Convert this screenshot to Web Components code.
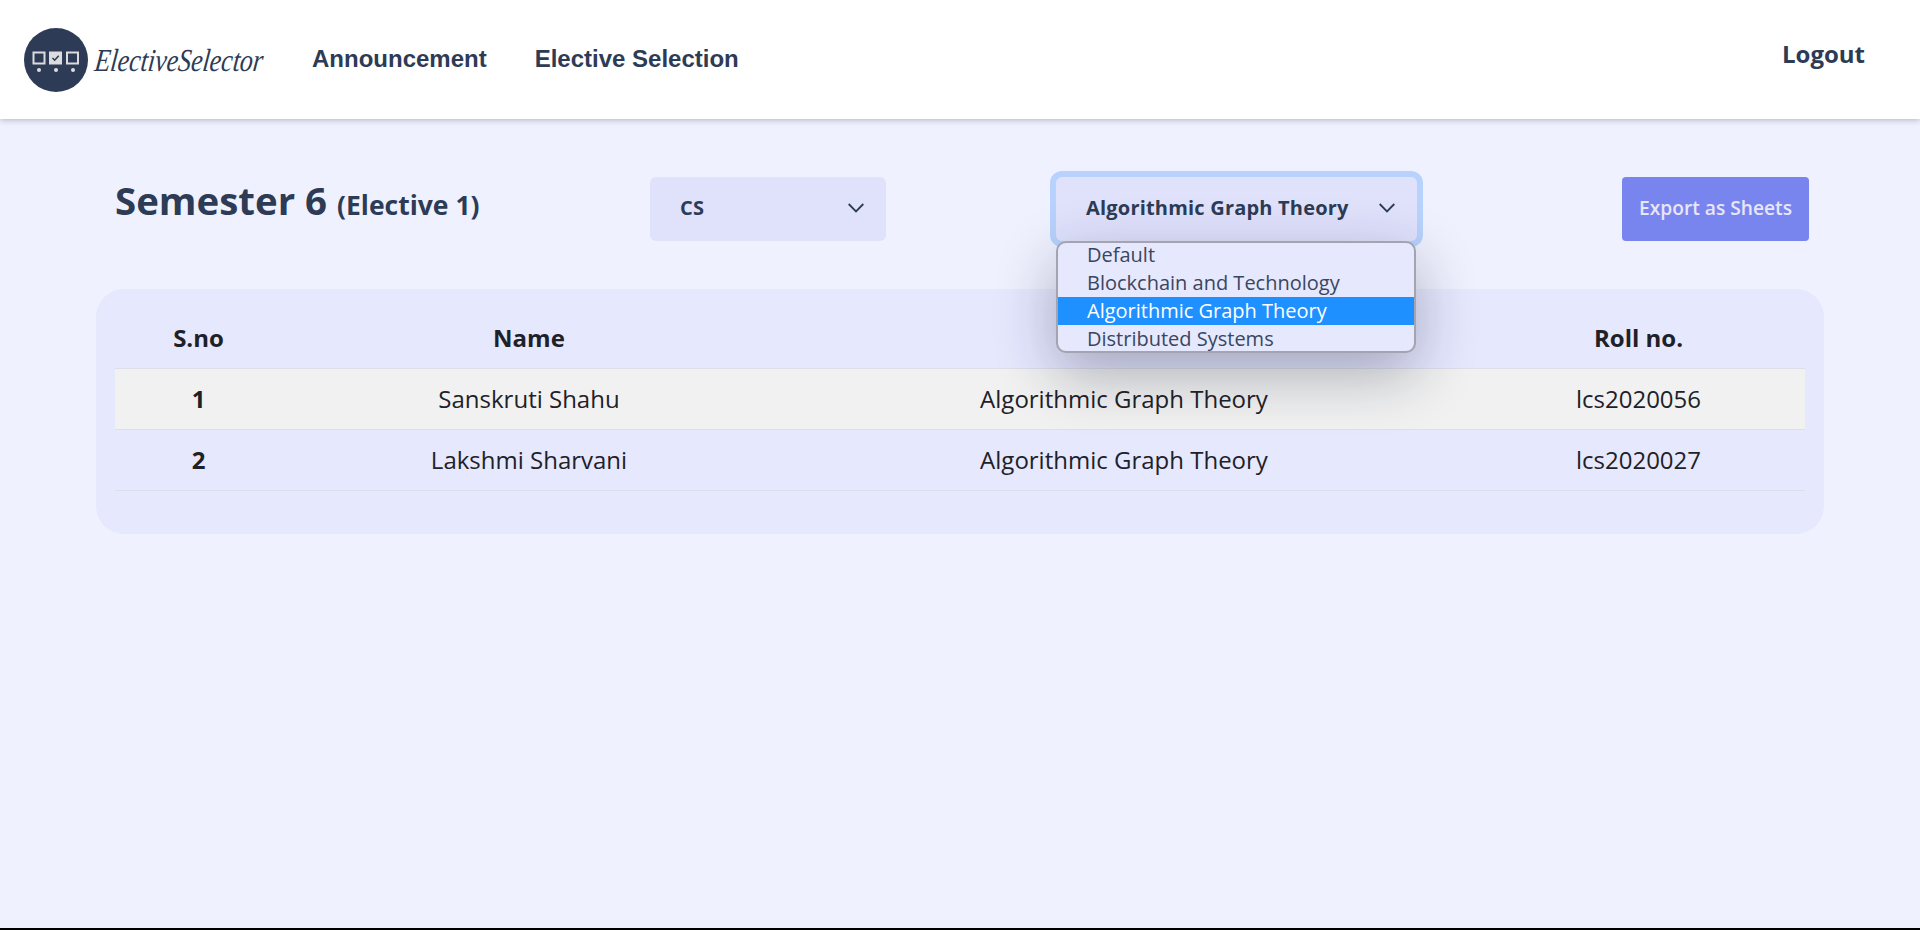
<!DOCTYPE html>
<html lang="en">
<head>
<meta charset="utf-8">
<title>ElectiveSelector</title>
<style>
  html, body { margin: 0; padding: 0; height: 100%; }
  body { background: #000; font-family: "Open Sans", sans-serif; color: #2d3b55; }
  es-app { height: 928px; }
</style>
</head>
<body>
<es-app>
  <es-navbar>
    <a slot="links">Announcement</a>
    <a slot="links">Elective Selection</a>
    <span slot="end">Logout</span>
  </es-navbar>
  <es-toolbar>
    <span slot="title">Semester 6</span>
    <span slot="sub">(Elective 1)</span>
    <es-select slot="branch" label="CS" style="width:236px"></es-select>
    <es-select slot="elective" label="Algorithmic Graph Theory" open style="width:361px"
      options="Default|Blockchain and Technology|Algorithmic Graph Theory|Distributed Systems"></es-select>
    <es-button slot="action">Export as Sheets</es-button>
  </es-toolbar>
  <es-table>
    <es-row head n="S.no" name="Name" subject="Subject" roll="Roll no."></es-row>
    <es-row hover n="1" name="Sanskruti Shahu" subject="Algorithmic Graph Theory" roll="lcs2020056"></es-row>
    <es-row n="2" name="Lakshmi Sharvani" subject="Algorithmic Graph Theory" roll="lcs2020027"></es-row>
  </es-table>
</es-app>

<script>
class EsApp extends HTMLElement {
  constructor() {
    super();
    this.attachShadow({ mode: 'open' });
    this.shadowRoot.innerHTML = `
      <style>
        :host { display: flex; flex-direction: column; background: #eff1fe; }
      </style>
      <slot></slot>
    `;
  }
}

class EsNavbar extends HTMLElement {
  constructor() {
    super();
    this.attachShadow({ mode: 'open' });
    this.shadowRoot.innerHTML = `
      <style>
        :host {
          display: flex;
          align-items: center;
          height: 119px;
          box-sizing: border-box;
          padding: 0 55px 0 24px;
          background: #fff;
          box-shadow: 0 1px 6px rgba(30, 41, 80, .3);
          position: relative;
          z-index: 1;
          color: #2d3b55;
        }
        .logo { display: flex; align-items: center; gap: 7px; }
        svg { display: block; }
        .word {
          display: block;
          width: 168px;
          white-space: nowrap;
          font: italic 400 32px/1 "Liberation Serif", serif;
          color: #2d3b55;
          transform: scaleX(.81) skewX(-8deg);
          transform-origin: left center;
        }
        nav { display: flex; gap: 48px; margin-left: 49px; margin-top: -2px; }
        ::slotted([slot=links]) {
          font: 700 24px/1 "Liberation Sans", Arial, sans-serif;
          color: #2d3b55;
        }
        .end { margin-left: auto; margin-top: -10px; }
        ::slotted([slot=end]) {
          font: 700 24px/1 "Open Sans", sans-serif;
          color: #2d3b55;
        }
      </style>
      <div class="logo">
        <svg width="64" height="64" viewBox="0 0 64 64">
          <circle cx="32" cy="32" r="32" fill="#2d3b57"/>
          <rect x="9.5" y="24.5" width="11" height="11" fill="none" stroke="#dcdcdc" stroke-width="2"/>
          <rect x="25" y="23.5" width="13" height="13" fill="#dcdcdc"/>
          <path d="M28.5 30l2.2 2.2 4-4.4" fill="none" stroke="#2d3b57" stroke-width="1.6"/>
          <rect x="43" y="24.5" width="11" height="11" fill="none" stroke="#dcdcdc" stroke-width="2"/>
          <circle cx="15" cy="42" r="2" fill="#dcdcdc"/>
          <circle cx="32" cy="42" r="2" fill="#dcdcdc"/>
          <circle cx="49" cy="42" r="2" fill="#dcdcdc"/>
        </svg>
        <span class="word">ElectiveSelector</span>
      </div>
      <nav><slot name="links"></slot></nav>
      <div class="end"><slot name="end"></slot></div>
    `;
  }
}

class EsToolbar extends HTMLElement {
  constructor() {
    super();
    this.attachShadow({ mode: 'open' });
    this.shadowRoot.innerHTML = `
      <style>
        :host {
          display: grid;
          grid-template-columns: 535px 406px 566px auto;
          align-items: start;
          padding: 58px 0 0 115px;
          height: 112px;
          color: #2d3b55;
        }
        h1 { margin: -3px 0 0; font-weight: 700; font-size: 38.4px; line-height: 52px; white-space: nowrap; }
        ::slotted([slot=sub]) { font-size: 26.5px; font-weight: 700; }
      </style>
      <h1><slot name="title"></slot> <slot name="sub"></slot></h1>
      <slot name="branch"></slot>
      <slot name="elective"></slot>
      <slot name="action"></slot>
    `;
  }
}

class EsSelect extends HTMLElement {
  constructor() {
    super();
    this.attachShadow({ mode: 'open' });
  }

  connectedCallback() {
    const label = this.getAttribute('label') || '';
    const options = (this.getAttribute('options') || '').split('|').filter(Boolean);
    const items = options.map(o =>
      `<li class="${o === label ? 'sel' : ''}">${o}</li>`).join('');
    this.shadowRoot.innerHTML = `
      <style>
        :host { display: block; position: relative; height: 64px; }
        .box {
          display: flex;
          align-items: center;
          justify-content: space-between;
          box-sizing: border-box;
          height: 64px;
          padding: 0 22px 2px 30px;
          border-radius: 6px;
          background: #e0e2fc;
          font: 700 20px/1 "Open Sans", sans-serif;
          letter-spacing: .2px;
          color: #2d3b55;
        }
        :host([open]) .box { box-shadow: 0 0 0 6px #b7d2fd; }
        ul {
          position: absolute;
          z-index: 5;
          left: 0;
          right: 1px;
          top: 64px;
          box-sizing: border-box;
          height: 112px;
          margin: 0;
          padding: 0;
          list-style: none;
          overflow: hidden;
          background: #e6e8fd;
          border: 2px solid #a3a4af;
          border-radius: 10px;
          box-shadow: 0 20px 60px rgba(20, 24, 50, .32);
          font: 400 20px/27px "Open Sans", sans-serif;
          color: #3a465f;
        }
        li { padding-left: 29px; height: 28px; white-space: nowrap; }
        li:first-child { margin-top: -2px; }
        li.sel { background: #1e90ff; color: #fff; }
      </style>
      <div class="box">
        <span>${label}</span>
        <svg width="16" height="10" viewBox="0 0 16 10"><path d="M.7 1 8 8.4 15.3 1" fill="none" stroke="#2d3b55" stroke-width="1.8"/></svg>
      </div>
      ${options.length ? `<ul>${items}</ul>` : ''}
    `;
  }
}

class EsButton extends HTMLElement {
  constructor() {
    super();
    this.attachShadow({ mode: 'open' });
    this.shadowRoot.innerHTML = `
      <style>
        :host {
          display: flex;
          align-items: center;
          justify-content: center;
          box-sizing: border-box;
          width: 187px;
          height: 64px;
          padding-bottom: 2px;
          border-radius: 4px;
          background: #7985ee;
          color: #e8e6f8;
          font: 600 19.2px/1 "Open Sans", sans-serif;
        }
      </style>
      <slot></slot>
    `;
  }
}

class EsTable extends HTMLElement {
  constructor() {
    super();
    this.attachShadow({ mode: 'open' });
    this.shadowRoot.innerHTML = `
      <style>
        :host {
          display: block;
          margin: 0 96px;
          height: 245px;
          box-sizing: border-box;
          padding: 19px 19px 0;
          border-radius: 28px;
          background: #e6e8fe;
        }
      </style>
      <slot></slot>
    `;
  }
}

class EsRow extends HTMLElement {
  constructor() {
    super();
    this.attachShadow({ mode: 'open' });
  }

  connectedCallback() {
    const a = n => this.getAttribute(n) || '';
    this.shadowRoot.innerHTML = `
      <style>
        :host {
          display: grid;
          grid-template-columns: 167px 494px 696px 333px;
          align-items: center;
          height: 61px;
          box-sizing: border-box;
          border-bottom: 1px solid #dcdeea;
          text-align: center;
          font: 400 24px/1 "Open Sans", sans-serif;
          color: #1f2128;
        }
        :host([hover]) { background: #f1f1f1; }
        :host([head]) { font-weight: 700; }
        .n { font-weight: 700; }
      </style>
      <div class="n">${a('n')}</div>
      <div>${a('name')}</div>
      <div>${a('subject')}</div>
      <div>${a('roll')}</div>
    `;
  }
}

customElements.define('es-app', EsApp);
customElements.define('es-navbar', EsNavbar);
customElements.define('es-toolbar', EsToolbar);
customElements.define('es-select', EsSelect);
customElements.define('es-button', EsButton);
customElements.define('es-table', EsTable);
customElements.define('es-row', EsRow);
</script>
</body>
</html>
